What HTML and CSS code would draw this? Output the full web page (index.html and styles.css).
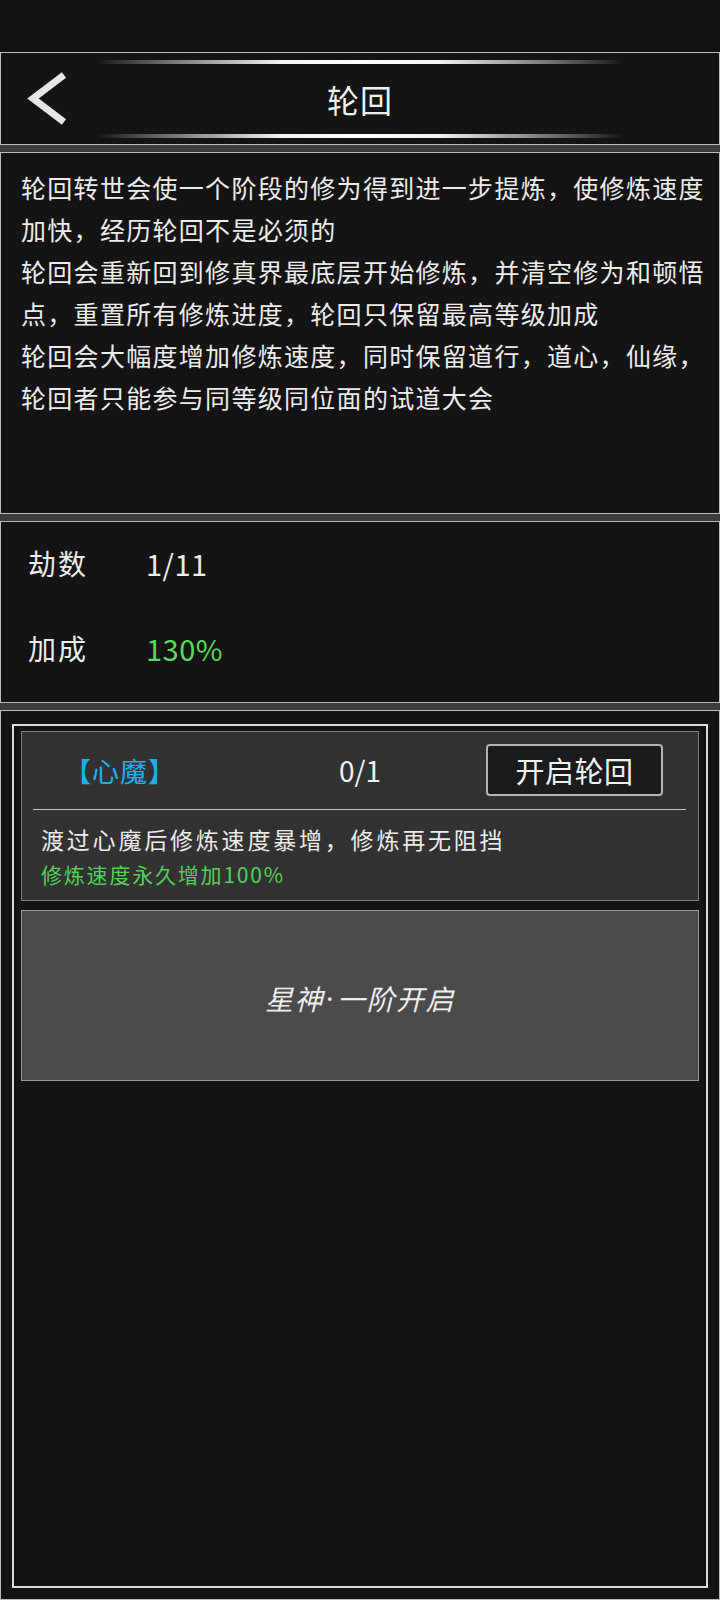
FILE: index.html
```
<!DOCTYPE html>
<html lang="zh-CN">
<head>
<meta charset="utf-8">
<title>轮回</title>
<link rel="stylesheet" href="styles.css">
</head>
<body>
<div class="statusbar"></div>
<div class="stack">
  <header class="panel header">
    <div class="glow"></div>
    <div class="titlebar">
      <div class="back">
        <svg width="44" height="56" viewBox="0 0 44 56"><polyline points="37,4 6,27.5 37,51" fill="none" stroke="#e6e6e6" stroke-width="7" stroke-linejoin="miter"/></svg>
      </div>
      <h1 class="title">轮回</h1>
      <div></div>
    </div>
    <div class="glow"></div>
  </header>

  <section class="panel desc">
    <p>轮回转世会使一个阶段的修为得到进一步提炼，使修炼速度<br>加快，经历轮回不是必须的</p>
    <p>轮回会重新回到修真界最底层开始修炼，并清空修为和顿悟<br>点，重置所有修炼进度，轮回只保留最高等级加成</p>
    <p>轮回会大幅度增加修炼速度，同时保留道行，道心，仙缘，<br>轮回者只能参与同等级同位面的试道大会</p>
  </section>

  <section class="panel stats">
    <div class="stat"><span class="label">劫数</span><span class="value">1/11</span></div>
    <div class="stat"><span class="label">加成</span><span class="value green">130%</span></div>
  </section>

  <section class="panel main">
    <div class="frame">
      <div class="card">
        <div class="card-row">
          <span class="tag">【心魔】</span>
          <span class="count">0/1</span>
          <button class="btn">开启轮回</button>
        </div>
        <div class="divider"></div>
        <p class="card-text">渡过心魔后修炼速度暴增，修炼再无阻挡</p>
        <p class="card-bonus">修炼速度永久增加100%</p>
      </div>
      <div class="locked">星神<span class="dot">·</span>一阶开启</div>
    </div>
  </section>
</div>
</body>
</html>
```
FILE: styles.css
```
* { box-sizing: border-box; }
html, body { margin: 0; padding: 0; }
body {
  width: 720px;
  height: 1600px;
  background: #131313;
  font-family: "Noto Sans CJK SC", "Noto Sans", sans-serif;
  color: #ececec;
  display: flex;
  flex-direction: column;
  overflow: hidden;
}
.statusbar { height: 52px; flex: none; background: #131313; }
.stack {
  flex: 1;
  display: flex;
  flex-direction: column;
  gap: 7px;
  background: #3c3c3c;
}
.panel {
  background: #141414;
  border: 1px solid #bdbdbd;
}
/* header */
.header {
  height: 93px;
  flex: none;
  padding: 7px 0 5px;
  display: flex;
  flex-direction: column;
}
.glow {
  width: 530px;
  height: 4px;
  margin: 0 auto;
  background: linear-gradient(90deg, rgba(255,255,255,0) 0%, rgba(255,255,255,0.35) 12%, rgba(255,255,255,0.95) 35%, #fff 50%, rgba(255,255,255,0.95) 65%, rgba(255,255,255,0.35) 88%, rgba(255,255,255,0) 100%);
  filter: blur(0.6px);
  border-radius: 2px;
}
.titlebar {
  height: 70px;
  display: grid;
  grid-template-columns: 1fr auto 1fr;
  align-items: center;
}
.back { padding-left: 26px; display: flex; align-items: center; }
.back svg { display: block; }
.title {
  margin: 0;
  font-size: 32px;
  font-weight: 400;
  letter-spacing: 1px;
  color: #f0f0f0;
  line-height: 1;
}
/* description */
.desc {
  height: 362px;
  flex: none;
  padding: 13px 0 0 20px;
}
.desc p {
  margin: 0;
  font-size: 25px;
  line-height: 42px;
  letter-spacing: 1.3px;
  white-space: nowrap;
  color: #ececec;
}
/* stats */
.stats {
  height: 182px;
  flex: none;
  padding: 12px 0 0 27px;
  display: flex;
  flex-direction: column;
  gap: 27px;
}
.stat {
  display: grid;
  grid-template-columns: 118px auto;
  align-items: center;
  height: 58px;
}
.label { font-size: 28px; letter-spacing: 2px; }
.value { font-size: 29px; letter-spacing: 0.5px; }
.green { color: #58dc58; }
/* main */
.main {
  flex: 1;
  padding: 13px 11px 11px 11px;
  display: flex;
}
.frame {
  flex: 1;
  border: 2px solid #dcdcdc;
  padding: 5px 7px;
  display: flex;
  flex-direction: column;
  gap: 9px;
}
.card {
  height: 170px;
  background: #323232;
  border: 1px solid #7e7e7e;
  padding-top: 12px;
}
.card-row {
  display: grid;
  grid-template-columns: 1fr 1fr 1fr;
  align-items: center;
  height: 52px;
}
.tag {
  color: #1ab2ea;
  font-size: 27px;
  letter-spacing: 1px;
  padding-left: 42px;
}
.count {
  justify-self: center;
  font-size: 28px;
  color: #f0f0f0;
}
.btn {
  justify-self: end;
  margin-right: 35px;
  width: 177px;
  height: 52px;
  background: #1b1b1b;
  border: 2px solid #b4b4b4;
  border-radius: 4px;
  color: #f2f2f2;
  font-family: "Noto Sans CJK SC", "Noto Sans", sans-serif;
  font-size: 29px;
  letter-spacing: 0.5px;
  padding: 0;
  line-height: 1;
}
.divider {
  height: 1px;
  background: #c4c4c4;
  margin: 13px 12px 0 11px;
}
.card-text {
  margin: 0;
  padding-left: 19px;
  margin-top: 13px;
  font-size: 23px;
  line-height: 32px;
  letter-spacing: 2.8px;
  color: #ececec;
  white-space: nowrap;
}
.card-bonus {
  margin: 0;
  padding-left: 19px;
  margin-top: 6px;
  font-size: 21px;
  line-height: 26px;
  letter-spacing: 1.8px;
  color: #52d052;
  white-space: nowrap;
}
.locked {
  height: 171px;
  background: #4b4b4b;
  border: 1px solid #9c9c9c;
  display: flex;
  align-items: center;
  justify-content: center;
  font-size: 28px;
  font-style: italic;
  letter-spacing: 1.5px;
  color: #ededed;
  padding-top: 4px;
}
.dot {
  font-family: "Noto Sans", sans-serif;
  font-style: normal;
  margin: 0 2px;
}
```
